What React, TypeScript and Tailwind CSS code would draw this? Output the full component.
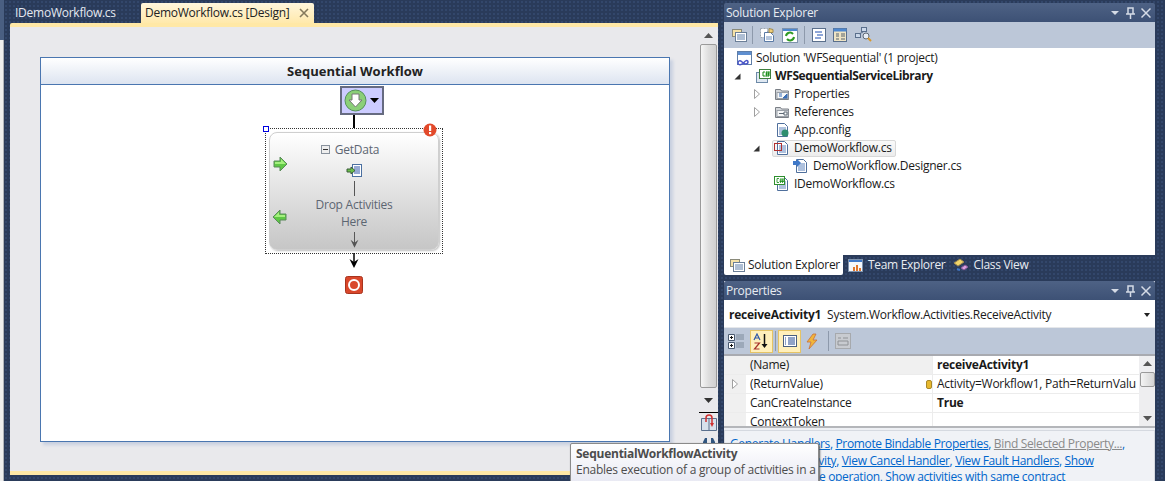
import type { ReactNode } from 'react';

const dither =
  'bg-[#2a3b5a] bg-[radial-gradient(#33476b_1px,transparent_1px)] bg-[length:4px_4px]';

// --- small drawn icons ---

function Svg({ w = 16, h = 16, children }: { w?: number; h?: number; children: ReactNode }) {
  return (
    <svg width={w} height={h} viewBox={`0 0 ${w} ${h}`} className="block shrink-0">
      {children}
    </svg>
  );
}

function DocIcon({ badge }: { badge?: ReactNode }) {
  return (
    <Svg>
      <path d="M3.500 1.500h7l3 3v10h-10z" fill="#fff" stroke="#4f6f9c" />
      <path d="M5 6h7M5 8h7M5 10h7M5 12h7" stroke="#5f84bd" />
      {badge}
    </Svg>
  );
}

function SolutionIcon() {
  return (
    <Svg w={17} h={17}>
      <rect x="1.500" y="1.500" width="14" height="13" fill="#fff" stroke="#5f7ea8" />
      <rect x="2" y="2" width="13" height="3" fill="#5f8fd0" />
      <path
        d="M2 13c0-2 2-3 3.500-1.500S8 14 9.500 14 12 13 12 12s-1-2-2.500-1S7 14 5 14.500 2 14 2 13z"
        fill="none"
        stroke="#4a56c8"
        strokeWidth="1.500"
      />
    </Svg>
  );
}

function SharpBadge() {
  return (
    <g>
      <rect x="0.500" y="0.500" width="10" height="8" fill="#fff" stroke="#2f8f2f" />
      <path d="M5 2.500H3v4h2M7 2l-.5 5M9 2l-.5 5M5.500 4H10M5.500 5.500H10" stroke="#0f8a0f" fill="none" strokeWidth="0.800" />
    </g>
  );
}

function ProjectIcon() {
  return (
    <Svg w={17} h={16}>
      <rect x="1.500" y="4.500" width="11" height="10" fill="#dfe8f2" stroke="#6d8aa8" />
      <rect x="4.500" y="1.500" width="11" height="9" fill="#fff" stroke="#3f7f3f" />
      <path d="M10 4H8v4h2M12 3l-1 6M14 3l-1 6M10.500 5H15M10.500 7H15" stroke="#138a13" fill="none" />
    </Svg>
  );
}

function FolderIcon({ kind }: { kind: 'props' | 'refs' }) {
  return (
    <Svg>
      <path d="M1.500 3.500h5l1 1.500h7v8.500h-13z" fill="#d3d6da" stroke="#7a7f86" />
      <rect x="3" y="6.500" width="11" height="6" fill="#f7f8f9" stroke="#9aa0a8" />
      {kind === 'props' ? (
        <path d="M5 8h3M5 10h3M9 12l4-4v4z" stroke="#3b6fb5" fill="#3b6fb5" />
      ) : (
        <path d="M5 9.500h5M10 8h3v3h-3z" stroke="#5f6a76" fill="#fff" />
      )}
    </Svg>
  );
}

function Triangle({ filled }: { filled?: boolean }) {
  return filled ? (
    <Svg w={7} h={7}>
      <path d="M6.500 0.500v6h-6z" fill="#333" />
    </Svg>
  ) : (
    <Svg w={6} h={10}>
      <path d="M0.500 0.500l5 4.500-5 4.500z" fill="#fff" stroke="#a0a0a0" />
    </Svg>
  );
}

function ToolIcon({ kind }: { kind: number }) {
  if (kind === 0)
    return (
      <Svg>
        <rect x="1.500" y="2.500" width="9" height="7" fill="#f5e2a8" stroke="#8a8a7a" />
        <rect x="4.500" y="5.500" width="11" height="9" fill="#fff" stroke="#6b7f98" />
        <path d="M6 8h8M6 10h8M6 12h8" stroke="#5f7ea8" />
      </Svg>
    );
  if (kind === 1)
    return (
      <Svg>
        <path d="M1.500 1.500h7v9h-7z" fill="#fff" stroke="#9aa4b0" strokeDasharray="2 1" />
        <path d="M5.500 5.500h6l3 3v6h-9z" fill="#fff" stroke="#5b7ba6" />
        <path d="M10 1.500l4 1v3h-4z" fill="#f0cf7a" stroke="#a08a50" />
        <path d="M7 10h6M7 12h6" stroke="#6f8fbd" />
      </Svg>
    );
  if (kind === 2)
    return (
      <Svg>
        <rect x="0.500" y="1.500" width="15" height="14" fill="#fff" stroke="#7f93ad" />
        <rect x="1" y="2" width="14" height="2" fill="#4f88cf" />
        <path d="M4 9a4 4 0 0 1 7-2M12 10a4 4 0 0 1-7 2" fill="none" stroke="#2f9a22" strokeWidth="2" />
      </Svg>
    );
  if (kind === 3)
    return (
      <Svg>
        <rect x="1.500" y="1.500" width="13" height="13" fill="#fff" stroke="#5a6f8c" />
        <path d="M4 5h7M6 8h6M4 11h6" stroke="#1f4fb0" />
      </Svg>
    );
  if (kind === 4)
    return (
      <Svg>
        <rect x="1.500" y="1.500" width="13" height="13" fill="#efe4c4" stroke="#5a6f8c" />
        <rect x="1.500" y="1.500" width="13" height="3" fill="#4f88cf" />
        <path d="M4 7h3M4 9h3M4 12h3M9 7h4M9 9h4M9 12h4" stroke="#55626f" />
      </Svg>
    );
  return (
    <Svg w={17} h={16}>
      <rect x="6.500" y="0.500" width="5" height="4" fill="#cbd8ea" stroke="#5a6f8c" />
      <rect x="0.500" y="6.500" width="5" height="4" fill="#cbd8ea" stroke="#5a6f8c" />
      <path d="M8 5L4 7" stroke="#5a6f8c" />
      <circle cx="11" cy="9" r="3" fill="#e8eef6" stroke="#5f6a76" />
      <path d="M13 11l3 3" stroke="#d8982c" strokeWidth="2" />
    </Svg>
  );
}

function GreenArrow({ flip }: { flip?: boolean }) {
  return (
    <svg width="15" height="16" viewBox="0 0 15 16" className={flip ? 'block -scale-x-100' : 'block'}>
      <path d="M1 5h6V1l7 7-7 7v-4H1z" fill="#5fc845" stroke="#5a8a5a" />
      <path d="M2 6h6V3l5 5H2z" fill="#a4f07e" />
    </svg>
  );
}

function Chevron({ up, dark }: { up?: boolean; dark?: boolean }) {
  return (
    <svg width="9" height="5" viewBox="0 0 9 5" className="block">
      <path d={up ? 'M4.500 0l4.500 5H0z' : 'M0 0h9L4.500 5z'} fill={dark ? '#333' : '#555'} />
    </svg>
  );
}

function PanelTitle({ title }: { title: string }) {
  return (
    <div className="h-[19px] rounded-t-[2px] bg-gradient-to-b from-[#4e6285] to-[#3d5175] flex items-center pl-[2px] pr-[4px] text-[#e8ecf2]">
      <span className="flex-1">{title}</span>
      <svg width="58" height="14" viewBox="0 0 58 14" className="block">
        <path d="M18 5h8l-4 4z" fill="#d5dbe6" />
        <path d="M35 2h5v6h-5zM37.500 8v5M33 8h9" fill="none" stroke="#d5dbe6" strokeWidth="1.500" />
        <path d="M48.500 2.500l9 9M57.500 2.500l-9 9" stroke="#d5dbe6" strokeWidth="1.500" />
      </svg>
    </div>
  );
}

// --- panels ---

const treeRows = [
  { depth: 0, icon: <SolutionIcon />, label: "Solution 'WFSequential' (1 project)" },
  { depth: 1, open: true, bold: true, icon: <ProjectIcon />, label: 'WFSequentialServiceLibrary' },
  { depth: 2, closed: true, icon: <FolderIcon kind="props" />, label: 'Properties' },
  { depth: 2, closed: true, icon: <FolderIcon kind="refs" />, label: 'References' },
  {
    depth: 2,
    icon: <DocIcon badge={<circle cx="11" cy="11" r="3.500" fill="#2f8f6f" />} />,
    label: 'App.config',
  },
  {
    depth: 2,
    open: true,
    selected: true,
    icon: (
      <DocIcon
        badge={<rect x="0.500" y="3.500" width="7" height="7" fill="none" stroke="#b03030" />}
      />
    ),
    label: 'DemoWorkflow.cs',
  },
  {
    depth: 3,
    icon: <DocIcon badge={<path d="M0 3h4V1l4 4-4 4V7H0z" fill="#3f78c8" />} />,
    label: 'DemoWorkflow.Designer.cs',
  },
  {
    depth: 2,
    icon: <DocIcon badge={<SharpBadge />} />,
    label: 'IDemoWorkflow.cs',
  },
];

function SolutionExplorer() {
  return (
    <div className="flex flex-col h-[272px]">
      <PanelTitle title="Solution Explorer" />
      <div className="h-[26px] bg-[#bcc7d8] flex items-center pl-[7px]">
        <ToolIcon kind={0} />
        <div className="w-px h-[18px] bg-[#8d99ab] ml-[5px] mr-[6px]" />
        <ToolIcon kind={1} />
        <div className="ml-[7px]">
          <ToolIcon kind={2} />
        </div>
        <div className="w-px h-[18px] bg-[#8d99ab] ml-[6px] mr-[6px]" />
        <ToolIcon kind={3} />
        <div className="ml-[5px]">
          <ToolIcon kind={4} />
        </div>
        <div className="ml-[7px]">
          <ToolIcon kind={5} />
        </div>
      </div>
      <div className="bg-white h-[207px] pt-px pl-[11px] text-[#1a1a1a]">
        {treeRows.map((r) => (
          <div key={r.label} className="h-[18px] flex items-center">
            <div
              className="shrink-0 flex items-center justify-end"
              style={{ width: r.depth * 19, paddingRight: r.depth ? 13 : 0 }}
            >
              {r.open && <Triangle filled />}
              {r.closed && <Triangle />}
            </div>
            <div
              className={
                r.selected
                  ? 'flex items-center h-[17px] -ml-[1px] pl-px pr-[3px] rounded-[2px] border border-[#d8d8d8] bg-gradient-to-b from-[#fafafa] to-[#ececec]'
                  : 'flex items-center pl-px'
              }
            >
              <div className="w-[20px]">{r.icon}</div>
              <span className={r.bold ? 'font-bold tracking-[-0.4px]' : ''}>{r.label}</span>
            </div>
          </div>
        ))}
      </div>
      <div className="h-[20px] flex text-[#e8ecf2]">
        <div className="w-[119px] bg-white rounded-b-[2px] text-[#1a1a1a] flex items-center pl-[5px] gap-[3px]">
          <ToolIcon kind={0} />
          <span>Solution Explorer</span>
        </div>
        <div className="flex items-center pl-[5px] gap-[4px]">
          <svg width="16" height="16" viewBox="0 0 16 16" className="block">
            <rect x="0.500" y="2.500" width="14" height="12" fill="#f4f7fb" stroke="#7f93ad" />
            <rect x="1" y="3" width="13" height="2" fill="#3f78c8" />
            <path d="M5 14V10h2v4zM8 14V8h2v6zM11 14V11h2v3z" fill="#e0762c" />
          </svg>
          <span className="tracking-[-0.3px]">Team Explorer</span>
        </div>
        <div className="flex items-center pl-[8px] gap-[4px]">
          <svg width="16" height="16" viewBox="0 0 16 16" className="block">
            <path d="M1 6l6-4 4 3-6 4z" fill="#f1d66a" stroke="#a08a50" />
            <path d="M8 11l4-3 3 2-4 3z" fill="#d8a0e0" stroke="#8a5a9a" />
            <path d="M7 13l-3-1" stroke="#3f78c8" strokeWidth="2" />
          </svg>
          <span className="tracking-[-0.3px]">Class View</span>
        </div>
      </div>
    </div>
  );
}

function HotButton({ children }: { children: ReactNode }) {
  return (
    <div className="w-[23px] h-[23px] border border-[#e5c365] bg-[#ffefbb] flex items-center justify-center">
      {children}
    </div>
  );
}

const propRows = [
  { name: '(Name)', value: 'receiveActivity1', bold: true, gray: true },
  { name: '(ReturnValue)', value: 'Activity=Workflow1, Path=ReturnValu', expand: true },
  { name: 'CanCreateInstance', value: 'True', bold: true },
  { name: 'ContextToken', value: '' },
];

function Properties() {
  return (
    <div className="flex flex-col flex-1 mt-[6px] bg-[#eef0f4]">
      <PanelTitle title="Properties" />
      <div className="h-[28px] bg-white flex items-center pl-[5px] pr-[5px] pt-[2px] border-b border-[#e5e7ea]">
        <span className="font-bold mr-[6px]">receiveActivity1</span>
        <span className="flex-1">System.Workflow.Activities.ReceiveActivity</span>
        <svg width="6" height="4" viewBox="0 0 6 4" className="block">
          <path d="M0 0h6L3 4z" fill="#222" />
        </svg>
      </div>
      <div className="h-[26px] bg-[#bcc7d8] flex items-center pl-[3px]">
        <svg width="18" height="20" viewBox="0 0 18 20" className="block">
          <path d="M1.500 3.500h6v6h-6zM1.500 11.500h6v6h-6z" fill="#fff" stroke="#4a5a70" />
          <path d="M3 6.500h3M4.500 5v3M3 14.500h3M4.500 13v3" stroke="#111" />
          <path d="M9 4h8M9 6h8M9 8h8M9 12h8M9 14h8M9 16h8" stroke="#7d8a9a" />
        </svg>
        <div className="ml-[5px]">
          <HotButton>
            <svg width="17" height="17" viewBox="0 0 17 17" className="block">
              <path d="M11.500 1v12" stroke="#111" strokeWidth="1.500" />
              <path d="M8.500 11h6l-3 4z" fill="#111" />
              <path d="M1 7l3-6 3 6M2.500 5h3" fill="none" stroke="#3158a8" strokeWidth="1.200" />
              <path d="M1.500 10h5l-5 6h5" fill="none" stroke="#a8322c" strokeWidth="1.200" />
            </svg>
          </HotButton>
        </div>
        <div className="w-px h-[20px] bg-[#8d99ab] mx-[2px]" />
        <HotButton>
          <svg width="14" height="14" viewBox="0 0 14 14" className="block">
            <rect x="0.500" y="1.500" width="13" height="11" fill="#fff" stroke="#4a5f80" />
            <path d="M2 4h1M2 6h1M2 8h1M2 10h1M5 4h7M5 6h7M5 8h7M5 10h7" stroke="#23478f" />
          </svg>
        </HotButton>
        <div className="ml-[3px] mr-[4px]">
          <svg width="16" height="17" viewBox="0 0 16 17" className="block">
            <path d="M9 1L3 9h4l-2 7 8-9H9l3-6z" fill="#f1b63a" stroke="#c9703a" strokeWidth="0.800" />
          </svg>
        </div>
        <div className="w-px h-[20px] bg-[#8d99ab] ml-[4px] mr-[6px]" />
        <svg width="16" height="16" viewBox="0 0 16 16" className="block">
          <rect x="0.500" y="0.500" width="15" height="15" fill="#c8cbd0" stroke="#a6a9ad" />
          <path d="M3 5h3M3 8h10v4H3zM8 5h5" fill="none" stroke="#8f9296" />
        </svg>
      </div>
      <div className="h-[74px] flex border-y-2 border-[#a8aab0] border-b-[#b4b6ba] overflow-hidden">
        <div className="flex-1 bg-white min-w-0">
          {propRows.map((p) => (
            <div key={p.name} className="h-[19px] flex border-b border-[#ececec]">
              <div className="w-[22px] bg-[#f0f0f0] flex items-center justify-center shrink-0">
                {p.expand && <Triangle />}
              </div>
              <div
                className={`w-[187px] shrink-0 flex items-center pl-[4px] border-r border-[#ececec] ${
                  p.gray ? 'bg-[#f0f0f0]' : ''
                }`}
              >
                <span className="flex-1">{p.name}</span>
                {p.expand && (
                  <svg width="6" height="9" viewBox="0 0 6 9" className="block">
                    <rect x="0.500" y="0.500" width="5" height="8" rx="1.500" fill="#e8b92e" stroke="#a8882a" />
                  </svg>
                )}
              </div>
              <div className={`flex-1 flex items-center pl-[4px] overflow-hidden whitespace-nowrap ${p.bold ? 'font-bold' : ''}`}>
                {p.value}
              </div>
            </div>
          ))}
        </div>
        <div className="w-[16px] shrink-0 bg-[#eeeef0] flex flex-col items-center">
          <div className="h-[14px] flex items-center">
            <Chevron up />
          </div>
          <div className="w-[15px] h-[15px] rounded-[2px] border border-[#9a9a9a] bg-gradient-to-r from-[#f4f4f4] to-[#d4d4d4] mt-[2px]" />
          <div className="flex-1" />
          <div className="h-[16px] flex items-center">
            <Chevron />
          </div>
        </div>
      </div>
      <div className="mt-[2px] border border-[#d5d9e0] bg-[#f0f2f6] pl-[5px] pt-[5px] leading-[16.500px] tracking-[-0.35px] text-[#0066cc] whitespace-nowrap overflow-hidden flex-1">
        <div>
          <u>Generate Handlers</u>, <u>Promote Bindable Properties</u>,{' '}
          <u className="text-[#8a8a8a]">Bind Selected Property...</u>,
        </div>
        <div>
          <u>Promote the Activity</u>, <u>View Cancel Handler</u>, <u>View Fault Handlers</u>, <u>Show</u>
        </div>
        <div>
          <u>Activities for same operation</u>, <u>Show activities with same contract</u>
        </div>
      </div>
    </div>
  );
}

function Activity() {
  return (
    <div className="relative w-[178px] h-[126px] border border-dotted border-[#333] p-[3px] z-10 -mb-px">
      <div className="absolute -left-[3px] -top-[3px] w-[6px] h-[6px] border border-[#0000e0] bg-white" />
      <svg width="14" height="14" viewBox="0 0 14 14" className="absolute right-[5px] -top-[6px] block z-10">
        <circle cx="7" cy="7" r="6.500" fill="#e2492a" />
        <rect x="6" y="2.500" width="2.200" height="5.500" fill="#fff" />
        <rect x="6" y="9" width="2.200" height="2.200" fill="#fff" />
      </svg>
      <div className="h-full rounded-[8px] border border-[#cfcfcf] bg-gradient-to-b from-white to-[#c6c6c6] shadow-[1px_1px_2px_#c0c0c0] flex flex-col items-center relative text-[#5d6672]">
        <div className="absolute left-[3px] top-[23px]">
          <GreenArrow />
        </div>
        <div className="absolute left-[2px] top-[76px]">
          <GreenArrow flip />
        </div>
        <div className="h-[16px] mt-[9px] mr-[8px] flex items-center gap-[5px]">
          <svg width="9" height="9" viewBox="0 0 9 9" className="block">
            <rect x="0.500" y="0.500" width="8" height="8" fill="#eee" stroke="#88919c" />
            <path d="M2 4.500h5" stroke="#333" />
          </svg>
          <span>GetData</span>
        </div>
        <div className="mt-[5px]">
          <svg width="17" height="16" viewBox="0 0 17 16" className="block">
            <rect x="6.500" y="1.500" width="9" height="12" fill="#fff" stroke="#4a6fa0" />
            <path d="M8 4h6M8 6h6M8 8h6M8 10h6" stroke="#2f55a8" />
            <path d="M1 6h4V4l4 3.500L5 11V9H1z" fill="#6ac04a" stroke="#3a5a3a" />
          </svg>
        </div>
        <div className="w-px h-[16px] bg-[#555] mt-[2px]" />
        <div className="text-center leading-[16.500px] mt-[1px]">
          Drop Activities
          <br />
          Here
        </div>
        <svg width="9" height="17" viewBox="0 0 9 17" className="block mt-[2px]">
          <path d="M4.500 0v12" stroke="#555" />
          <path d="M0.500 8l4 3 4-3-4 8z" fill="#555" />
        </svg>
      </div>
    </div>
  );
}

function Designer() {
  return (
    <div className="flex-1 min-w-0 pl-[30px] pt-[30px]">
      <div className="w-[630px] h-[385px] bg-white border border-[#4a76b0] shadow-[3px_3px_3px_#c8d0e0] flex flex-col items-center">
        <div className="w-full h-[27px] shrink-0 border-b border-[#4a76b0] bg-gradient-to-b from-white to-[#dde4f0] text-center font-bold text-[13px] leading-[26px] text-[#222] tracking-[0.03px]">
          Sequential Workflow
        </div>
        <div className="flex flex-col items-center pr-[2px]">
          <div className="w-[44px] h-[29px] shrink-0 mt-px ml-[16px] border-2 border-[#666b80] bg-[#ccccff] flex items-center pl-[2px] gap-[3px]">
            <svg width="23" height="23" viewBox="0 0 23 23" className="block">
              <circle cx="11.500" cy="11.500" r="10.500" fill="#8bcf78" stroke="#55905a" />
              <path d="M8 5h7v6h3l-6.500 7L5 11h3z" fill="#fff" stroke="#777" />
            </svg>
            <svg width="9" height="5" viewBox="0 0 9 5" className="block">
              <path d="M0 0h9L4.500 5z" fill="#000" />
            </svg>
          </div>
          <div className="w-[1.500px] h-[13px] bg-black shrink-0" />
          <Activity />
          <svg width="10" height="16" viewBox="0 0 10 16" className="block shrink-0 relative z-20">
            <path d="M5 0v10" stroke="#000" strokeWidth="1.500" />
            <path d="M0.500 6l4.500 3 4.500-3L5 15z" fill="#000" />
          </svg>
          <svg width="18" height="18" viewBox="0 0 18 18" className="block shrink-0 mt-[7px]">
            <rect x="0.500" y="0.500" width="17" height="17" rx="2" fill="#d9472b" stroke="#a8341e" />
            <circle cx="9" cy="9" r="5" fill="none" stroke="#fff" strokeWidth="2" />
          </svg>
        </div>
      </div>
    </div>
  );
}

function DocScrollbar() {
  return (
    <div className="w-[19px] shrink-0 flex flex-col items-center">
      <div className="h-[17px] flex items-center">
        <Chevron up />
      </div>
      <div className="w-[17px] h-[344px] rounded-[2px] border border-[#9a9a9a] bg-gradient-to-r from-[#f6f6f6] via-[#dedede] to-[#d0d0d0]" />
      <div className="h-[24px] flex items-center">
        <Chevron dark />
      </div>
      <div className="w-full h-[1px] bg-black" />
      <svg width="18" height="18" viewBox="0 0 18 18" className="block mt-px">
        <path d="M1.500 4.500h15v12h-15z" fill="#d7e0ec" stroke="#5a6f8c" />
        <path d="M9 4.500v12" stroke="#5a6f8c" />
        <path d="M6 8V4a3 3 0 0 1 6 0v6" fill="none" stroke="#d03030" strokeWidth="1.500" />
        <path d="M10 9h4l-2 4z" fill="#d03030" />
      </svg>
      <svg width="16" height="14" viewBox="0 0 16 14" className="block mt-[4px]">
        <path d="M2 12V6l2-4h2v10zM10 12V2h2l2 4v6z" fill="#30557f" />
      </svg>
    </div>
  );
}

export default function App() {
  return (
    <div
      className={`relative w-[1165px] h-[481px] overflow-hidden flex font-['Open_Sans',sans-serif] text-[12px] tracking-[-0.25px] leading-none text-[#1a1a1a] ${dither}`}
    >
      {/* toolbox strip on the far left */}
      <div className="w-[4px] shrink-0 flex flex-col">
        <div className="h-[40px] bg-[#4a5f82]" />
        <div className="flex-1 bg-[#eeeeee] border-r border-[#b0b4ba]" />
      </div>

      {/* document well */}
      <div className="w-[708px] ml-[6px] shrink-0 flex flex-col h-[475px] pt-[3px]">
        <div className="h-[20px] shrink-0 flex">
          <div className="w-[131px] pl-[5px] flex items-center text-[#e4e8f0]">IDemoWorkflow.cs</div>
          <div className="w-[173px] rounded-t-[2px] bg-gradient-to-b from-[#fff6dc] to-[#ffe9ab] flex items-center pl-[4px] text-[#222]">
            <span className="flex-1">DemoWorkflow.cs [Design]</span>
            <svg width="10" height="10" viewBox="0 0 10 10" className="block mr-[5px]">
              <path d="M1 1l8 8M9 1l-8 8" stroke="#857a5c" strokeWidth="1.600" />
            </svg>
          </div>
        </div>
        <div className="flex-1 flex flex-col rounded-tl-[2px] border-y-4 border-[#ffe8a6] bg-[#e9e9ec] min-h-0">
          <div className="flex-1 flex min-h-0">
            <Designer />
            <DocScrollbar />
          </div>
        </div>
      </div>

      {/* tool windows */}
      <div className="w-[431px] ml-[6px] shrink-0 flex flex-col pt-[3px]">
        <SolutionExplorer />
        <Properties />
      </div>

      <div className="absolute left-[570px] top-[443px] w-[249px] h-[44px] rounded-[2px] border border-[#8a8a8a] bg-gradient-to-b from-white to-[#e6e7f2] pl-[5px] pt-[2px] text-[#4c4c4c] shadow-[1px_1px_2px_#555]">
        <div className="font-bold h-[16px] flex items-center">SequentialWorkflowActivity</div>
        <div className="h-[16px] flex items-center whitespace-nowrap">
          Enables execution of a group of activities in a
        </div>
      </div>
    </div>
  );
}
